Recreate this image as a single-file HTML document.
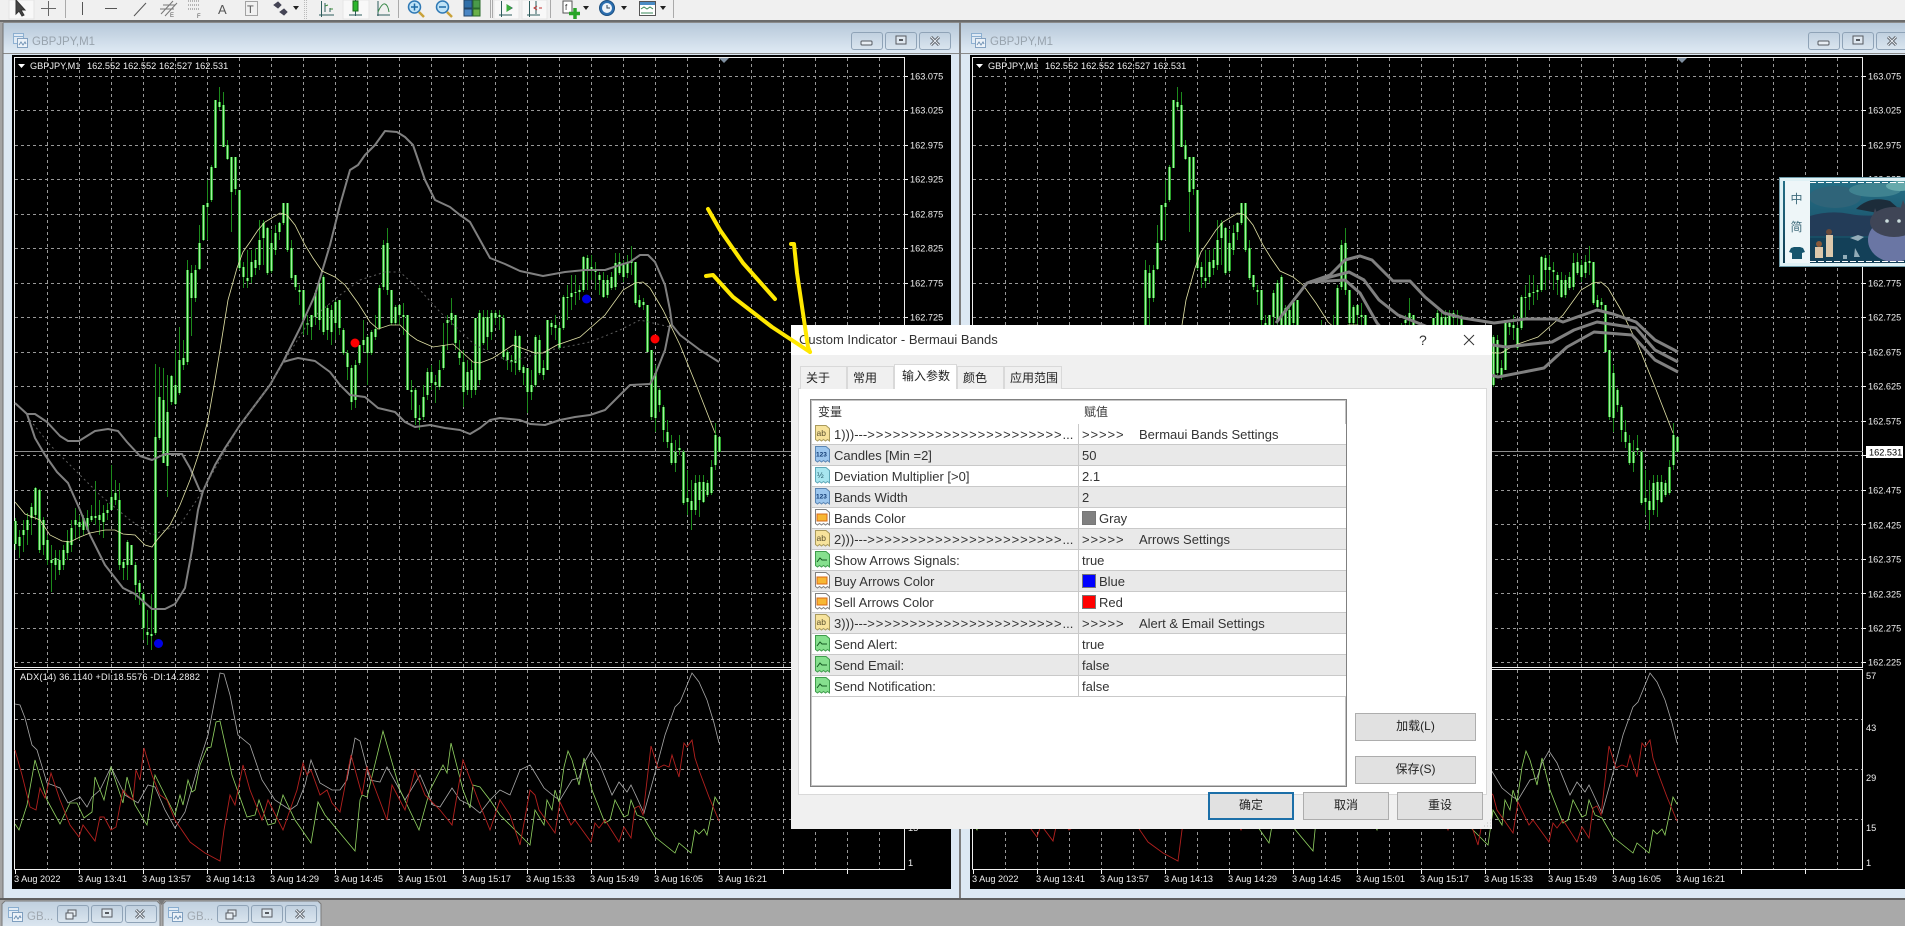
<!DOCTYPE html>
<html lang="zh"><head><meta charset="utf-8"><title>GBPJPY,M1 - Custom Indicator</title>
<style>
html,body{margin:0;padding:0;width:1905px;height:926px;overflow:hidden;background:#a9a9a9}
svg{position:absolute;left:0;top:0;display:block}
svg text{font-family:"Liberation Sans",Arial,sans-serif}
#dlg{position:absolute;left:791px;top:325px;width:701px;height:504px;background:#f0f0f0;font:13px/20px "Liberation Sans","Noto Sans CJK SC",sans-serif;color:#333}
#dlg div{position:absolute;box-sizing:border-box;white-space:nowrap}
.tb{left:0;top:0;width:701px;height:30px;background:#fff}
.ttl{left:8px;top:5px;font-size:13px;color:#333}
.q{left:628px;top:5px;font-size:14px}
.tab{top:41px;height:23px;background:#f0f0f0;border:1px solid #d9d9d9;border-bottom:0;font-size:12px;line-height:22px;padding-left:5px;color:#222}
.tab.a{top:39px;height:25px;background:#fff;z-index:3;line-height:22px;padding-left:7px}
.pan{left:7px;top:63px;width:689px;height:407px;background:#fff;border:1px solid #d9d9d9}
.tbl{left:19px;top:74px;width:537px;height:388px;background:#fff;border:1px solid #808080;box-shadow:inset 0 0 0 1px #c4c4c4}
.hd{left:1px;top:1px;width:534px;height:23px;font-size:12px;line-height:23px}
.hd b{font-weight:400;position:absolute;top:0}
.r{left:1px;width:534px;height:21px;border-bottom:1px solid #c9c9c9;background:#fff}
.r.g{background:#e9e9e9}
.r span{position:absolute;top:0;line-height:22px}
.r .n{left:22px}
.r .v{left:270px}
.r .cd{position:absolute;left:266px;top:0;width:1px;height:21px;background:#c9c9c9}
.r svg{left:2px;top:1px;position:absolute}
.ls{letter-spacing:.9px}
.sw{position:absolute;left:270px;top:3px;width:14px;height:14px;border:1px solid #777;box-sizing:border-box}
.btn{background:#e1e1e1;border:1px solid #adadad;font-size:12px;line-height:25px;text-align:center;color:#222}
.btn.p{border:2px solid #1c6fa8;line-height:23px}
</style></head><body>

<svg width="1905" height="926" viewBox="0 0 1905 926" xmlns="http://www.w3.org/2000/svg">
<defs>
<linearGradient id="tg" x1="0" y1="0" x2="0" y2="1"><stop offset="0" stop-color="#b7c8d9"/><stop offset="1" stop-color="#dfeaf4"/></linearGradient>
<linearGradient id="bg" x1="0" y1="0" x2="0" y2="1"><stop offset="0" stop-color="#c0d0df"/><stop offset="1" stop-color="#dae5ef"/></linearGradient>
<g id="wi"><rect x=".5" y=".5" width="10" height="10" fill="#e6eff8" stroke="#7ea6cc"/><path d="M.5 3.5H10.5" stroke="#7ea6cc"/><rect x="4.5" y="5.5" width="10" height="9" fill="#f2f7fc" stroke="#7194b8"/><path d="M6 12l2-3 2 3 2-3 1 2" fill="none" stroke="#5e84aa"/></g>
<rect id="bt" x=".5" y=".5" width="31" height="17" rx="2.5" fill="url(#bg)" stroke="#8fa3b7"/>
<g id="xg"><path d="M4 1l8 8M12 1l-8 8" stroke="#5a5f66" stroke-width="3"/><path d="M4 1l8 8M12 1l-8 8" stroke="#e8eef4" stroke-width="1"/></g>
<path id="bd" fill="none" d="M15 521V544M19 537V546M23 530V535M27 520V530M31 507V518M35 488V515M39 490V550M43 520V545M47 540V560M51 560V563M55 558V565M59 560V570M63 550V565M67 541V553M71 528V545M75 520V525M79 522V527M83 518V530M87 518V530M91 516V520M95 516V518M99 515V520M103 513V522M107 510V513M111 497V510M115 493V500M119 500V565M123 562V568M127 542V565M131 545V565M135 565V585M139 583V592M143 594V628M147 632V635M151 634V636M155 437V633M159 397V438M163 400V463M167 412V466M171 376V402M175 385V404M179 360V393M183 358V365M187 270V362M191 273V298M195 270V298M199 243V269M203 205V240M207 203V207M211 167V200M215 100V168M219 102V107M223 105V147M227 145V159M231 157V192M235 157V189M239 190V268M243 267V277M247 278V281M251 262V277M255 260V268M259 240V265M263 223V238M267 228V273M271 243V271M275 233V250M279 223V232M283 203V223M287 203V250M291 248V278M295 275V287M299 290V292M303 290V320M307 323V325M311 315V327M315 293V317M319 283V320M323 277V332M327 308V330M331 310V332M335 302V323M339 300V328M343 330V353M347 353V367M351 368V402M355 365V400M359 345V363M363 340V345M367 337V353M371 332V353M375 329V337M379 288V328M383 245V287M387 243V290M391 290V323M395 307V323M399 305V315M403 315V317M407 315V390M411 390V392M415 390V418M419 418V420M423 397V417M427 372V395M431 372V383M435 382V385M439 370V387M443 345V368M447 320V323M451 313V320M455 315V343M459 352V358M463 362V392M467 372V390M471 370V390M475 318V390M479 313V380M483 317V343M487 317V337M491 313V332M495 313V318M499 315V317M503 318V357M507 352V360M511 360V362M515 336V363M519 336V370M523 367V373M527 368V392M531 385V392M535 337V385M539 340V373M543 368V375M547 320V370M551 323V327M555 325V328M559 328V348M563 297V328M567 297V298M571 293V297M575 292V293M579 290V292M583 257V290M587 258V270M591 267V270M595 270V272M599 275V280M603 280V297M607 280V295M611 277V288M615 263V287M619 262V273M623 265V277M627 262V273M631 261V263M635 262V303M639 300V307M643 302V305M647 305V352M651 350V417M655 373V418M659 390V405M663 407V430M667 432V442M671 443V463M675 452V463M679 448V450M683 452V503M687 498V502M691 501V510M695 483V510M699 482V500M703 482V502M707 483V495M711 467V493M715 435V465M719 437V452"/>

<g id="base">
<path fill="none" stroke="#989898" stroke-dasharray="3 3" d="M47.5 58V667M79.5 58V667M111.5 58V667M143.5 58V667M175.5 58V667M207.5 58V667M239.5 58V667M271.5 58V667M303.5 58V667M335.5 58V667M367.5 58V667M399.5 58V667M431.5 58V667M463.5 58V667M495.5 58V667M527.5 58V667M559.5 58V667M591.5 58V667M623.5 58V667M655.5 58V667M687.5 58V667M719.5 58V667M751.5 58V667M783.5 58V667M815.5 58V667M847.5 58V667M879.5 58V667
M47.5 670V869M79.5 670V869M111.5 670V869M143.5 670V869M175.5 670V869M207.5 670V869M239.5 670V869M271.5 670V869M303.5 670V869M335.5 670V869M367.5 670V869M399.5 670V869M431.5 670V869M463.5 670V869M495.5 670V869M527.5 670V869M559.5 670V869M591.5 670V869M623.5 670V869M655.5 670V869M687.5 670V869M719.5 670V869M751.5 670V869M783.5 670V869M815.5 670V869M847.5 670V869M879.5 670V869
M15 76.5H904M15 110.5H904M15 145.5H904M15 179.5H904M15 214.5H904M15 248.5H904M15 283.5H904M15 317.5H904M15 352.5H904M15 386.5H904M15 421.5H904M15 455.5H904M15 490.5H904M15 524.5H904M15 559.5H904M15 593.5H904M15 628.5H904M15 662.5H904M15 719.5H904M15 769.5H904M15 819.5H904"/>
<path fill="none" stroke="#f0f0f0" d="M14.5 667.5V57.5H904.5V667.5H14.5M14.5 869.5V669.5H904.5V869.5H14.5"/>
<path fill="none" stroke="#f0f0f0" d="M904 76.5h4M904 110.5h4M904 145.5h4M904 179.5h4M904 214.5h4M904 248.5h4M904 283.5h4M904 317.5h4M904 352.5h4M904 386.5h4M904 421.5h4M904 455.5h4M904 490.5h4M904 524.5h4M904 559.5h4M904 593.5h4M904 628.5h4M904 662.5h4M15.5 870v4M79.5 870v4M143.5 870v4M207.5 870v4M271.5 870v4M335.5 870v4M399.5 870v4M463.5 870v4M527.5 870v4M591.5 870v4M655.5 870v4M719.5 870v4M783.5 870v4M847.5 870v4"/>
<path stroke="#8c8c8c" d="M15 451.5H905"/>
<polygon points="719,58 729,58 724,63" fill="#7f8fa0"/>
<g transform="translate(.5 0)">
<path fill="none" stroke="#1c8a1c" d="M15 518V550M19 530V558M23 520V552M27 513V545M31 503V535M35 487V520M39 489V553M43 517V555M47 535V565M51 545V592M55 550V580M59 550V575M63 545V570M67 530V560M71 520V552M75 508V540M79 515V540M83 515V535M87 510V530M91 505V522M95 481V525M99 500V535M103 505V538M107 503V520M111 465V510M115 480V505M119 483V570M123 560V580M127 540V580M131 545V565M135 562V600M139 580V605M143 592V640M147 610V645M151 594V650M155 364V635M159 367V440M163 368V460M167 375V497M171 375V405M175 350V405M179 327V395M183 340V370M187 260V365M191 265V336M195 265V302M199 225V270M203 205V241M207 180V240M211 165V202M215 100V168M219 87V110M223 92V147M227 140V160M231 157V232M235 157V195M239 190V270M243 262V288M247 250V288M251 250V283M255 248V275M259 220V270M263 220V265M267 227V275M271 230V273M275 225V255M279 222V240M283 203V225M287 203V252M291 240V280M295 275V290M299 285V305M303 290V335M307 315V335M311 315V340M315 290V325M319 280V330M323 275V335M327 305V340M331 305V345M335 300V340M339 300V335M343 328V355M347 350V380M351 365V410M355 360V408M359 345V365M363 320V352M367 335V385M371 330V355M375 315V340M379 285V330M383 240V290M387 228V295M391 290V325M395 305V325M399 305V325M403 303V335M407 315V390M411 380V410M415 388V425M419 405V430M423 385V420M427 368V400M431 365V390M435 375V403M439 360V390M443 323V370M447 315V350M451 298V325M455 315V350M459 340V365M463 350V407M467 360V395M471 360V398M475 318V395M479 310V385M483 310V345M487 310V350M491 310V340M495 310V325M499 310V330M503 315V360M507 350V370M511 355V372M515 330V375M519 335V372M523 365V385M527 368V413M531 370V400M535 335V387M539 335V375M543 360V380M547 320V370M551 320V335M555 315V340M559 325V350M563 295V330M567 285V320M571 275V310M575 275V305M579 285V300M583 256V292M587 255V290M591 255V280M595 262V290M599 272V295M603 272V298M607 275V298M611 272V290M615 253V290M619 253V275M623 260V282M627 255V278M631 246V275M635 262V305M639 295V308M643 298V310M647 305V352M651 350V420M655 365V432M659 388V412M663 405V442M667 420V448M671 435V465M675 440V472M679 435V455M683 450V505M687 470V515M691 480V530M695 475V515M699 475V517M703 475V503M707 480V497M711 460V495M715 423V470M719 437V452"/>
<use href="#bd" stroke="#2aa02a" stroke-width="3"/>
<use href="#bd" stroke="#a2f2a2" stroke-width="1"/>
</g>
</g>

<g id="top">
<path fill="none" stroke="#e2e2a6" stroke-width=".8" d="M15 502L25 514 40 520 50 535 62 541 70 542 80 537 90 533 105 530 115 530 123 534 135 535 145 545 152 547 157 540 170 525 180 505 190 480 200 450 208 420 215 380 220 350 228 300 237 268 243 252 250 242 258 230 265 222 280 213 287 215 295 225 305 245 313 258 322 271 335 277 345 285 358 303 370 322 378 329 390 325 400 325 410 335 417 340 433 347 453 344 473 362 480 363 493 358 513 345 535 353 543 353 557 345 580 337 605 315 623 290 635 283 643 282 650 288 663 310 680 345 697 387 715 433"/>
<path fill="none" stroke="#a8a8a8" stroke-width=".8" d="M15 704L20 705 25 718 32 745 37 750 47 783 60 788 68 803 80 797 87 807 92 797 100 790 111 767 115 775 125 795 138 803 148 785 155 787 165 810 175 828 185 812 200 760 208 735 220 673 224 674 230 695 238 735 250 745 262 780 275 800 290 810 297 805 305 785 311 760 320 783 332 790 340 790 347 780 355 738 360 741 370 780 380 782 387 767 397 785 405 800 420 775 433 805 440 807 452 788 460 800 470 805 480 813 490 800 500 790 510 795 520 770 530 765 535 773 544 788 555 797 560 800 572 780 579 778 584 763 591 751 599 763 612 795 619 782 627 792 631 785 644 813 655 773 665 735 675 707 680 702 692 673 699 682 707 700 714 723 719 743"/>
<path fill="none" stroke="#92d462" stroke-width=".8" d="M15 824L19 830 27 805 35 760 47 800 60 824 70 803 77 803 84 818 92 812 95 777 104 800 111 767 123 803 127 777 135 805 147 825 155 775 175 815 180 795 183 805 188 780 192 792 195 790 200 765 207 748 211 747 216 722 220 721 232 775 247 817 255 815 259 800 268 825 275 823 283 795 295 820 311 843 318 802 325 815 355 851 360 800 362 795 367 797 383 731 400 790 419 830 430 790 443 765 447 773 451 743 463 790 470 808 473 785 480 787 490 800 500 815 510 825 522 837 530 845 535 810 544 825 547 800 552 810 555 790 559 802 564 767 568 751 572 760 579 785 584 758 592 790 605 823 610 820 615 800 624 817 628 815 631 800 637 815 644 818 655 837 675 853 679 843 691 853 695 830 699 834 704 829 707 835 715 797 719 804"/>
<path fill="none" stroke="#b3201e" stroke-width=".9" d="M15 750L22 775 30 807 36 810 40 788 45 798 51 773 60 800 70 825 79 837 83 825 95 841 100 817 104 817 111 830 116 827 123 790 127 795 133 800 136 770 140 780 144 748 152 775 160 795 167 800 175 820 190 842 205 853 220 861 224 830 230 795 235 805 243 765 250 790 262 820 268 800 283 830 297 790 303 763 307 775 311 770 320 795 327 790 332 803 340 812 351 755 362 795 367 767 387 820 392 785 405 810 415 770 425 795 440 810 452 825 463 760 480 805 490 830 500 800 510 815 520 845 530 790 535 795 539 810 555 833 560 802 571 825 575 820 591 842 595 823 599 828 605 820 619 842 624 827 631 838 635 808 639 806 643 815 651 746 658 768 664 765 669 767 672 755 679 777 684 743 687 747 692 740 695 758 700 773 709 797 719 821"/>
<g fill="#efefef" font-size="9.2">
<polygon points="18,64 25,64 21.5,68" fill="#fff"/>
<text x="30" y="69">GBPJPY,M1</text><text x="87" y="69">162.552</text><text x="123" y="69">162.552</text><text x="159" y="69">162.527</text><text x="195" y="69">162.531</text>
<text x="20" y="680" textLength="180" lengthAdjust="spacing">ADX(14) 36.1140 +DI:18.5576 -DI:14.2882</text>
<text x="910" y="79.500">163.075</text><text x="910" y="113.500">163.025</text><text x="910" y="148.500">162.975</text><text x="910" y="182.500">162.925</text><text x="910" y="217.500">162.875</text><text x="910" y="251.500">162.825</text><text x="910" y="286.500">162.775</text><text x="910" y="320.500">162.725</text><text x="910" y="355.500">162.675</text><text x="910" y="389.500">162.625</text><text x="910" y="424.500">162.575</text><text x="910" y="493.500">162.475</text><text x="910" y="528.500">162.425</text><text x="910" y="562.500">162.375</text><text x="910" y="597.500">162.325</text><text x="910" y="631.500">162.275</text><text x="910" y="665.500">162.225</text>
<text x="908" y="679">57</text><text x="908" y="731">43</text><text x="908" y="781">29</text><text x="908" y="831">15</text><text x="908" y="866">1</text>
<text x="14" y="882">3 Aug 2022</text><text x="78" y="882">3 Aug 13:41</text><text x="142" y="882">3 Aug 13:57</text><text x="206" y="882">3 Aug 14:13</text><text x="270" y="882">3 Aug 14:29</text><text x="334" y="882">3 Aug 14:45</text><text x="398" y="882">3 Aug 15:01</text><text x="462" y="882">3 Aug 15:17</text><text x="526" y="882">3 Aug 15:33</text><text x="590" y="882">3 Aug 15:49</text><text x="654" y="882">3 Aug 16:05</text><text x="718" y="882">3 Aug 16:21</text>
</g>
</g>

<g id="ttbtn">
<use href="#bt"/><use href="#bt" x="34"/><use href="#bt" x="68"/>
</g>
</defs>

<rect width="1905" height="926" fill="#a9a9a9"/>
<rect width="1905" height="20" fill="#f0f0f0"/>
<rect y="20" width="1905" height="2.5" fill="#6b6b6b"/>

<!-- windows -->
<rect x="0" y="22" width="3" height="878" fill="#a3a3a3"/>
<rect x="3" y="23" width="956" height="876" fill="#dce8f3"/>
<rect x="961" y="23" width="944" height="876" fill="#dce8f3"/>
<rect x="959" y="22" width="2" height="878" fill="#7d7d7d"/>
<rect x="3" y="23" width="956" height="30" fill="url(#tg)"/>
<rect x="961" y="23" width="944" height="30" fill="url(#tg)"/>
<rect x="3" y="53" width="956" height="1" fill="#8a8a8a"/><rect x="961" y="53" width="944" height="1" fill="#8a8a8a"/>
<path d="M3 23V899" stroke="#707070"/>
<rect x="12" y="55" width="939" height="834" fill="#000"/>
<rect x="970" y="55" width="935" height="834" fill="#000"/>
<rect y="898" width="1905" height="2" fill="#5f5f5f"/>

<use href="#wi" x="13" y="33" opacity=".8"/><use href="#wi" x="971" y="33" opacity=".8"/>
<text x="32" y="45" font-size="11.5" fill="#98a3ad">GBPJPY,M1</text>
<text x="990" y="45" font-size="11.5" fill="#98a3ad">GBPJPY,M1</text>

<use href="#ttbtn" x="851" y="32"/><use href="#ttbtn" x="1808" y="32"/>
<g id="g1"><rect x="861" y="41" width="11" height="4" rx="1" fill="#e8eef4" stroke="#55595f"/><rect x="896" y="36" width="10" height="8" fill="#dfe8f0" stroke="#55595f"/><rect x="899" y="39" width="4" height="2" fill="#55595f"/><use href="#xg" x="927" y="36"/></g>
<use href="#g1" x="957"/>

<!-- charts -->
<use href="#base"/>
<g fill="none" stroke="#808080" stroke-width="2" stroke-linejoin="round">
<path d="M15 403L27 414 35 414 47 422 60 436 68 441 79 441 95 431 108 429 118 431 127 442 140 456 152 460 165 454 182 454 190 468 200 491 203 491 215 465 225 448 240 425 255 405 270 385 283 362 300 328 315 295 330 245 340 205 350 170 358 165 365 155 375 145 385 131 397 132 405 137 413 145 425 180 435 200 450 207 460 215 470 222 480 240 490 258 505 264 520 271 543 276 565 272 585 270 605 270 620 265 630 262 640 255 648 255 655 262 665 285 670 310 672 325 680 335 700 350 719 362"/>
<path d="M27 414L35 438 45 455 57 472 68 483 80 510 90 535 105 565 123 588 135 594 152 609 165 609 175 604 185 588 192 550 198 510 203 491"/>
<path d="M283 362L290 360 298 358 315 361 330 372 340 385 350 395 365 397 378 408 395 412 405 422 415 427 430 425 445 428 460 430 470 434 480 428 490 420 500 418 520 420 530 424 545 425 560 420 575 417 590 415 605 410 615 400 630 385 650 384 655 375 665 350 670 325"/>
</g>
<path fill="none" stroke="#5e5e5e" stroke-dasharray="2 3" d="M30 420L50 445 75 470 100 495 130 520 152 535 165 530 180 525 200 495 240 425 270 385 285 360 310 320 340 295 360 280 385 272 400 272 420 290 440 312 475 345 510 362 550 350 590 342 620 330 640 320 653 323 670 327"/>
<use href="#top"/>
<circle cx="355" cy="343" r="4.5" fill="#f00"/><circle cx="655" cy="339" r="4.5" fill="#f00"/>
<circle cx="586.5" cy="299" r="4.5" fill="#0000e6"/><circle cx="158.5" cy="643.5" r="4.5" fill="#0000e6"/>

<use href="#base" x="958"/>
<use href="#top" x="958"/>
<g fill="none" stroke="#808080" stroke-width="3" stroke-linejoin="round">
<path d="M1276 323L1307 283 1330 275 1345 260 1360 256 1372 260 1393 281 1410 281 1425 297 1444 313 1463 318 1494 323 1525 319 1555 319 1563 322 1597 310 1613 314 1636 322 1655 340 1678 352"/>
<path d="M1310 282L1330 277 1349 272 1364 280 1379 300 1398 315 1418 323 1460 340 1506 347 1552 342 1574 330 1597 322 1636 328 1655 350 1678 362"/>
<path d="M1310 282L1345 280 1360 293 1377 323 1400 350 1498 377 1544 368 1567 347 1594 332 1632 335 1655 360 1678 372"/>
</g>
<rect x="1866" y="446" width="37" height="12" fill="#fff"/>
<text x="1869" y="455.5" font-size="9.2" fill="#000">162.531</text>

<!-- toolbar icons -->
<g fill="none" stroke="#555">
<rect x="9" y="0" width="25" height="19" fill="#f8f8f8" stroke="#e4e4e4"/>
<path d="M16 0l0 14 3-3 3 5 2-1-3-5 4 0z" fill="#444" stroke="#333"/>
<path d="M48.5 1v15M41 8.500h15" stroke="#666"/><path d="M65.500 0v18" stroke="#aaa"/>
<path d="M82.500 2v13M105 8.500h12M134 16L146 3"/>
<path d="M161 14l12-13M165 16l12-13M160 9h14M163 5h12" stroke="#777"/><text x="170" y="17" font-size="6" fill="#555" stroke="none">E</text>
<path d="M188 1h12M188 5h12M188 9h12" stroke-dasharray="1 1" stroke="#777"/><text x="197" y="18" font-size="6" fill="#555" stroke="none">F</text>
<text x="218" y="14" font-size="13" fill="#555" stroke="none">A</text>
<rect x="245.500" y="1.500" width="12" height="14" stroke-dasharray="1 1"/><text x="247" y="13" font-size="11" fill="#555" stroke="none">T</text>
<path d="M274 5l4-3 3 3-3 3zM280 12l4-3 3 3-3 3z" fill="#445" stroke="#445"/><path d="M293 6h6l-3 4z" fill="#222" stroke="none"/>
<path d="M304.500 0v20M306.500 0v20" stroke="#bbb" stroke-dasharray="1 1"/>
<rect x="343" y="0" width="26" height="19" fill="#f8f8f8" stroke="#e6e6e6"/>
<rect x="494" y="0" width="25" height="19" fill="#f8f8f8" stroke="#e6e6e6"/><rect x="522" y="0" width="25" height="19" fill="#f8f8f8" stroke="#e6e6e6"/>
<path d="M321.500 1v16M319 15h15M325 3v9M330 8v4" stroke="#2d5c5c"/><path d="M325 6l3-1M330 9l3 0" stroke="#3a8a3a"/>
<path d="M349 15h13M355.500 0v16" stroke="#2d5c5c"/><rect x="353" y="1" width="5" height="10" fill="#2bb62b" stroke="#1c6a1c"/>
<path d="M377 15h13M378 1v15" stroke="#2d5c5c"/><path d="M378 12q4-9 7-8t4 8" stroke="#3a8a4a"/>
<path d="M398.500 0v18" stroke="#aaa"/>
<circle cx="414.500" cy="7" r="6" fill="#bfe3f7" stroke="#2f79b5" stroke-width="1.500"/><path d="M411 7h7M414.500 3.500v7" stroke="#1d6aa5" stroke-width="1.500"/><path d="M419 12l5 5" stroke="#c9a23a" stroke-width="2.500"/>
<circle cx="442.500" cy="7" r="6" fill="#bfe3f7" stroke="#2f79b5" stroke-width="1.500"/><path d="M439 7h7" stroke="#1d6aa5" stroke-width="1.500"/><path d="M447 12l5 5" stroke="#c9a23a" stroke-width="2.500"/>
<rect x="464" y="0" width="8" height="8" fill="#2f6ea8" stroke="#246"/><rect x="473" y="0" width="7" height="8" fill="#4a9a4a" stroke="#2a6a2a"/><rect x="464" y="9" width="8" height="7" fill="#4a86c4" stroke="#246"/><rect x="473" y="9" width="7" height="7" fill="#6ab04a" stroke="#2a6a2a"/>
<path d="M490.500 0v18M492.500 0v18" stroke="#aaa"/>
<path d="M501.500 1v16M499 15h13M507 11V5l5 3z" stroke="#2d5c5c"/><path d="M507 5v6l4-3z" fill="#3ab03a" stroke="#3ab03a"/>
<path d="M529.500 1v16M527 15h13M536 1v13" stroke="#2d5c5c"/><path d="M537 6l-3 2 3 2" stroke="#c03030"/><path d="M539 8h3" stroke="#c03030"/>
<path d="M550.500 0v18" stroke="#aaa"/>
<rect x="563" y="1" width="9" height="12" fill="#fff" stroke="#555"/><text x="565" y="10" font-size="8" fill="#333" stroke="none">f</text>
<path d="M575 8v11M569 13.500h11" stroke="#28a428" stroke-width="3.500"/><path d="M583 6h6l-3 4zM621 6h6l-3 4zM660 6h6l-3 4z" fill="#222" stroke="none"/>
<circle cx="607" cy="8" r="7.500" fill="#2b6eaf" stroke="#1c4f80"/><circle cx="607" cy="8" r="5" fill="#eef4fa" stroke="none"/><path d="M607 5v3h3" stroke="#345"/>
<rect x="639.500" y="1.500" width="16" height="14" fill="#fff" stroke="#555"/><rect x="640" y="2" width="15" height="3" fill="#4a8cc4" stroke="none"/><path d="M641 9l3-2 3 2 3-2 3 2M641 13h12" stroke="#3a8a5a"/>
<path d="M673.500 0v18" stroke="#aaa"/>
</g>

<!-- bottom tabs -->
<path d="M2 926V904l3-3H157l3 3V926Z" fill="url(#bg)"/>
<path d="M163 926V904l3-3H318l3 3V926Z" fill="url(#bg)"/>
<path d="M2 926V904l3-3H157l3 3V926M163 926V904l3-3H318l3 3V926" fill="none" stroke="#7a7a7a"/>
<polygon points="158,900 165,900 161.500,905" fill="#7a7a7a"/>
<use href="#wi" x="8" y="907" opacity=".85"/><use href="#wi" x="168" y="907" opacity=".85"/>
<text x="27" y="920" font-size="11.500" fill="#a0a8b0">GB...</text><text x="187" y="920" font-size="11.500" fill="#a0a8b0">GB...</text>
<use href="#ttbtn" x="57" y="905"/><use href="#ttbtn" x="217" y="905"/>
<g id="g2"><rect x="68" y="910" width="8" height="6" fill="#e6edf3" stroke="#55595f"/><rect x="66" y="913" width="7" height="6" fill="#e6edf3" stroke="#55595f"/><rect x="102" y="909" width="10" height="8" fill="#dfe8f0" stroke="#55595f"/><rect x="105" y="912" width="4" height="2" fill="#55595f"/><use href="#xg" x="132" y="909"/></g>
<use href="#g2" x="160"/>

<!-- floating widget -->
<g>
<rect x="1779.500" y="177.500" width="126" height="89" fill="#dff1f5" stroke="#6d9aa8"/>
<linearGradient id="tt" x1="0" y1="0" x2="0" y2="1"><stop offset="0" stop-color="#256f86"/><stop offset=".55" stop-color="#1c566e"/><stop offset="1" stop-color="#0f3a4e"/></linearGradient>
<rect x="1783" y="181" width="122" height="82" fill="url(#tt)"/>
<ellipse cx="1835" cy="197" rx="26" ry="11" fill="#2f6479"/><ellipse cx="1875" cy="190" rx="26" ry="7" fill="#3f8290"/><ellipse cx="1900" cy="186" rx="14" ry="5" fill="#66a9ac"/>
<path d="M1810 216q20-6 40-2t55-2v24h-95z" fill="#233c58"/>
<rect x="1810" y="238" width="95" height="25" fill="#134058"/>
<path d="M1856 209q14-14 34-8l8 7-20 5z" fill="#1c2c3a"/>
<path d="M1878 210v8" stroke="#1c2c3a"/>
<ellipse cx="1894" cy="240" rx="26" ry="22" fill="#6a76a4"/><ellipse cx="1894" cy="222" rx="24" ry="15" fill="#3f4556"/>
<path d="M1872 220l3-12 4 10zM1900 210l3-10 4 10z" fill="#3f4556"/>
<circle cx="1887" cy="221" r="1.800" fill="#cdd"/><circle cx="1899" cy="221" r="1.800" fill="#cdd"/>
<path d="M1815 247h8v11h-8zM1826 235h7v22h-7z" fill="#dcc8ac"/><circle cx="1819" cy="244" r="3" fill="#8a5a3a"/><circle cx="1829" cy="232" r="3" fill="#6a4a3a"/>
<path d="M1850 238l8-3 6 2-6 4zM1855 248l5 9h-6zM1843 255h4v4h-4z" fill="#93acb8"/>
<path d="M1810 182.500H1905M1810 261.500H1905" stroke="#fff" stroke-dasharray="6 2"/>
<rect x="1785" y="181" width="25" height="82" fill="#eef6f8"/>
<text x="1796.500" y="203" font-size="12" fill="#3f6b7b" text-anchor="middle" style="font-family:'Noto Sans CJK SC',sans-serif">中</text>
<text x="1796.500" y="231" font-size="12" fill="#3f6b7b" text-anchor="middle" style="font-family:'Noto Sans CJK SC',sans-serif">简</text>
<path d="M1791 248l3-1h6l3 1 2 4-3 1v6h-10v-6l-3-1z" fill="#17556d"/>
</g>
</svg>

<svg width="0" height="0" style="position:absolute"><defs>
<g id="ic"><path d="M1.500.5H12l3.500 3V16l-2-1.500-2 1.500-2-1.500-2 1.500-2-1.500-2 1.500-2-1.500z"/></g>
<symbol id="iab" viewBox="0 0 17 18"><use href="#ic" fill="#f7e39c" stroke="#a99a5c"/><text x="2.500" y="11" font-size="8.500" fill="#5c5230">ab</text></symbol>
<symbol id="i12" viewBox="0 0 17 18"><use href="#ic" fill="#9cc6ee" stroke="#5b86b4"/><text x="2" y="10.500" font-size="6.500" fill="#123a72" font-weight="700">123</text></symbol>
<symbol id="ihf" viewBox="0 0 17 18"><use href="#ic" fill="#a8e6ef" stroke="#5fa8b8"/><text x="3" y="11" font-size="8" fill="#255a68">½</text></symbol>
<symbol id="ibo" viewBox="0 0 17 18"><use href="#ic" fill="#86e08e" stroke="#3f9c4c"/><path d="M3 11l3-4 2 2h5" fill="none" stroke="#155a22"/></symbol>
<symbol id="ico" viewBox="0 0 17 18"><use href="#ic" fill="#fdfdfd" stroke="#808080"/><rect x="3" y="5" width="10" height="7" fill="#f7b733" stroke="#d86a1a"/></symbol>
</defs></svg>

<div id="dlg">
<div class="tb"></div>
<div class="ttl">Custom Indicator - Bermaui Bands</div>
<div class="q">?</div>
<svg style="left:672px;top:9px" width="12" height="12"><path d="M1 1l10 10M11 1L1 11" stroke="#333" fill="none"/></svg>
<div class="pan"></div>
<div class="tab" style="left:9px;width:47px">关于</div>
<div class="tab" style="left:56px;width:47px">常用</div>
<div class="tab a" style="left:103px;width:63px">输入参数</div>
<div class="tab" style="left:166px;width:47px">颜色</div>
<div class="tab" style="left:213px;width:58px">应用范围</div>
<div class="tbl">
 <div class="hd"><b style="left:6px">变量</b><b style="left:272px">赋值</b></div>
 <div class="r" style="top:24px"><svg width="17" height="18"><use href="#iab"/></svg><span class="n">1)))---<span class="ls" style="position:static">&gt;&gt;&gt;&gt;&gt;&gt;&gt;&gt;&gt;&gt;&gt;&gt;&gt;&gt;&gt;&gt;&gt;&gt;&gt;&gt;&gt;&gt;&gt;</span>...</span><i class="cd"></i><span class="v"><span class="ls" style="position:static">&gt;&gt;&gt;&gt;&gt;</span></span><span style="left:327px">Bermaui Bands Settings</span></div>
 <div class="r g" style="top:45px"><svg width="17" height="18"><use href="#i12"/></svg><span class="n">Candles [Min =2]</span><i class="cd"></i><span class="v">50</span></div>
 <div class="r" style="top:66px"><svg width="17" height="18"><use href="#ihf"/></svg><span class="n">Deviation Multiplier [&gt;0]</span><i class="cd"></i><span class="v">2.1</span></div>
 <div class="r g" style="top:87px"><svg width="17" height="18"><use href="#i12"/></svg><span class="n">Bands Width</span><i class="cd"></i><span class="v">2</span></div>
 <div class="r" style="top:108px"><svg width="17" height="18"><use href="#ico"/></svg><span class="n">Bands Color</span><i class="cd"></i><i class="sw" style="background:#808080"></i><span style="left:287px">Gray</span></div>
 <div class="r g" style="top:129px"><svg width="17" height="18"><use href="#iab"/></svg><span class="n">2)))---<span class="ls" style="position:static">&gt;&gt;&gt;&gt;&gt;&gt;&gt;&gt;&gt;&gt;&gt;&gt;&gt;&gt;&gt;&gt;&gt;&gt;&gt;&gt;&gt;&gt;&gt;</span>...</span><i class="cd"></i><span class="v"><span class="ls" style="position:static">&gt;&gt;&gt;&gt;&gt;</span></span><span style="left:327px">Arrows Settings</span></div>
 <div class="r" style="top:150px"><svg width="17" height="18"><use href="#ibo"/></svg><span class="n">Show Arrows Signals:</span><i class="cd"></i><span class="v">true</span></div>
 <div class="r g" style="top:171px"><svg width="17" height="18"><use href="#ico"/></svg><span class="n">Buy Arrows Color</span><i class="cd"></i><i class="sw" style="background:#00f"></i><span style="left:287px">Blue</span></div>
 <div class="r" style="top:192px"><svg width="17" height="18"><use href="#ico"/></svg><span class="n">Sell Arrows Color</span><i class="cd"></i><i class="sw" style="background:#f00"></i><span style="left:287px">Red</span></div>
 <div class="r g" style="top:213px"><svg width="17" height="18"><use href="#iab"/></svg><span class="n">3)))---<span class="ls" style="position:static">&gt;&gt;&gt;&gt;&gt;&gt;&gt;&gt;&gt;&gt;&gt;&gt;&gt;&gt;&gt;&gt;&gt;&gt;&gt;&gt;&gt;&gt;&gt;</span>...</span><i class="cd"></i><span class="v"><span class="ls" style="position:static">&gt;&gt;&gt;&gt;&gt;</span></span><span style="left:327px">Alert &amp; Email Settings</span></div>
 <div class="r" style="top:234px"><svg width="17" height="18"><use href="#ibo"/></svg><span class="n">Send Alert:</span><i class="cd"></i><span class="v">true</span></div>
 <div class="r g" style="top:255px"><svg width="17" height="18"><use href="#ibo"/></svg><span class="n">Send Email:</span><i class="cd"></i><span class="v">false</span></div>
 <div class="r" style="top:276px"><svg width="17" height="18"><use href="#ibo"/></svg><span class="n">Send Notification:</span><i class="cd"></i><span class="v">false</span></div>
</div>
<div class="btn" style="left:564px;top:388px;width:121px;height:28px">加载(L)</div>
<div class="btn" style="left:564px;top:431px;width:121px;height:28px">保存(S)</div>
<div class="btn p" style="left:417px;top:467px;width:86px;height:28px">确定</div>
<div class="btn" style="left:512px;top:467px;width:86px;height:28px">取消</div>
<div class="btn" style="left:606px;top:467px;width:86px;height:28px">重设</div>
<svg style="left:692px;top:494px" width="9" height="9"><path d="M7 1h1M4 4h1M7 4h1M1 7h1M4 7h1M7 7h1" stroke="#c0c0c0" fill="none"/></svg>
</div>

<svg width="1905" height="926" style="pointer-events:none">
<g fill="none" stroke="#ffe800" stroke-width="4" stroke-linecap="round" stroke-linejoin="round">
<path d="M708 209L720 230 743 263 775 299"/>
<path d="M706 276L713 275 733 297 772 327 810 352"/>
<path d="M791 244L794 244 797 273 808 347 810 352"/>
</g>
</svg>
</body></html>
